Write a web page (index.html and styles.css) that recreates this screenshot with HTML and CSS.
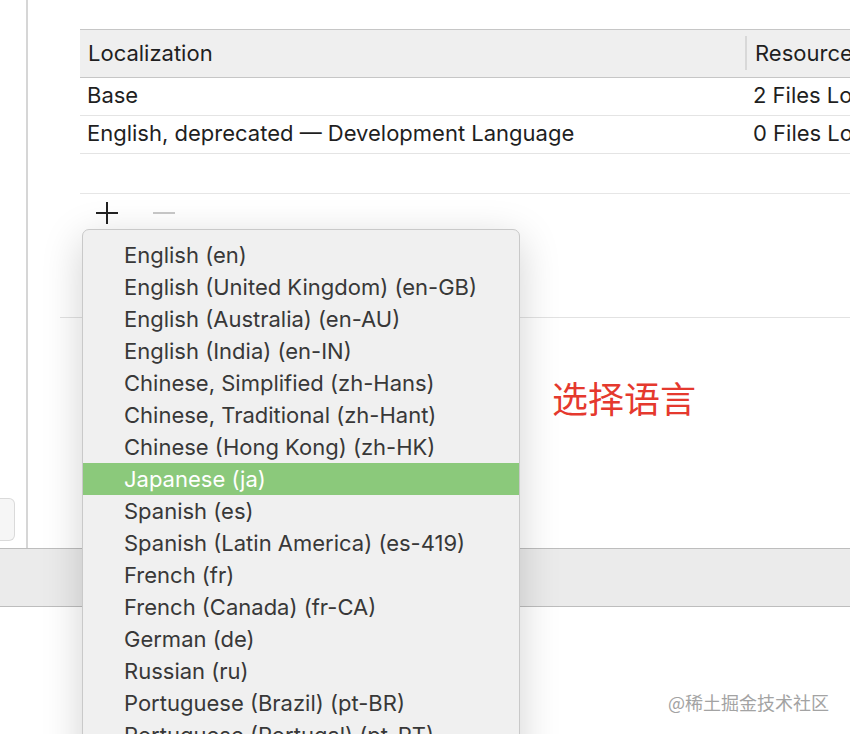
FILE: index.html
```html
<!DOCTYPE html>
<html lang="en">
<head>
<meta charset="utf-8">
<title>Localizations</title>
<link rel="stylesheet" href="styles.css">
</head>
<body>
<div class="page">
  <div class="top">
    <div class="sidebar">
      <div class="side-btn"></div>
    </div>
    <div class="main">
      <div class="table">
        <div class="thead">
          <div class="cell c1">Localization</div>
          <div class="cell c2 divided">Resources</div>
        </div>
        <div class="row">
          <div class="cell c1">Base</div>
          <div class="cell c2">2 Files Localized</div>
        </div>
        <div class="row">
          <div class="cell c1">English, deprecated — Development Language</div>
          <div class="cell c2">0 Files Localized</div>
        </div>
      </div>
      <div class="toolbar">
        <svg class="tool" width="22" height="22" viewBox="0 0 22 22"><path d="M11 0V22M0 11H22" stroke="#222" stroke-width="2" fill="none"/></svg>
        <svg class="tool" width="22" height="22" viewBox="0 0 22 22"><path d="M0 11H22" stroke="#c9c9c9" stroke-width="2" fill="none"/></svg>
      </div>
      <div class="panel-line"></div>
      <div class="note">选择语言</div>
    </div>
  </div>
  <div class="band"></div>
  <div class="bottom">
    <span class="watermark">@稀土掘金技术社区</span>
  </div>

  <div class="menu">
    <div class="item">English (en)</div>
    <div class="item">English (United Kingdom) (en-GB)</div>
    <div class="item">English (Australia) (en-AU)</div>
    <div class="item">English (India) (en-IN)</div>
    <div class="item">Chinese, Simplified (zh-Hans)</div>
    <div class="item">Chinese, Traditional (zh-Hant)</div>
    <div class="item">Chinese (Hong Kong) (zh-HK)</div>
    <div class="item selected">Japanese (ja)</div>
    <div class="item">Spanish (es)</div>
    <div class="item">Spanish (Latin America) (es-419)</div>
    <div class="item">French (fr)</div>
    <div class="item">French (Canada) (fr-CA)</div>
    <div class="item">German (de)</div>
    <div class="item">Russian (ru)</div>
    <div class="item">Portuguese (Brazil) (pt-BR)</div>
    <div class="item">Portuguese (Portugal) (pt-PT)</div>
    <div class="item">Italian (it)</div>
  </div>
</div>
</body>
</html>
```

FILE: styles.css
```css
* { box-sizing: border-box; }
html, body {
  margin: 0;
  padding: 0;
  background: #fff;
}
body {
  width: 850px;
  height: 734px;
  overflow: hidden;
  font-family: Inter, "Noto Sans", "Noto Sans CJK SC", sans-serif;
  color: #1f1f1f;
}
.page {
  position: relative;
  width: 850px;
  height: 734px;
  overflow: hidden;
}
.top {
  display: flex;
  height: 548px;
}
.sidebar {
  width: 28px;
  flex: none;
  border-right: 2px solid #d6d6d6;
  display: flex;
  flex-direction: column;
  justify-content: flex-end;
  padding-bottom: 7px;
}
.side-btn {
  width: 15px;
  height: 43px;
  background: #f6f6f6;
  border: 1px solid #dadada;
  border-left: none;
  border-radius: 0 6px 6px 0;
}
.main {
  flex: 1;
  min-width: 0;
  padding-top: 29px;
  display: flex;
  flex-direction: column;
}
.table {
  margin-left: 52px;
  font-size: 22px;
}
.thead {
  display: flex;
  height: 49px;
  background: #efefef;
  border-top: 1px solid #c6c6c6;
  border-bottom: 1px solid #c6c6c6;
  align-items: center;
  padding-bottom: 1px;
}
.row {
  display: flex;
  height: 38px;
  border-bottom: 1px solid #e4e4e4;
  align-items: center;
  padding-bottom: 3px;
}
.cell {
  white-space: nowrap;
  overflow: hidden;
}
.c1 {
  width: 665px;
  flex: none;
  padding-left: 7px;
}
.thead .c1 { padding-left: 8px; }
.c2 {
  flex: 1;
  padding-left: 8px;
}
.divided {
  border-left: 2px solid #d8d8d8;
  line-height: 34px;
}
.toolbar {
  margin-top: 39px;
  margin-left: 52px;
  height: 124px;
  border-top: 1px solid #e6e6e6;
  display: flex;
  align-items: flex-start;
  gap: 35px;
  padding: 8px 0 0 16px;
}
.tool { display: block; flex: none; }
.panel-line {
  margin-left: 32px;
  border-top: 1px solid #e2e2e2;
}
.note {
  margin-top: 58px;
  padding-left: 524px;
  font-family: "Noto Sans CJK SC", sans-serif;
  font-size: 36px;
  line-height: 42px;
  color: #e5392e;
}
.band {
  height: 59px;
  background: #ebebeb;
  border-top: 1px solid #bdbdbd;
  border-bottom: 1px solid #bdbdbd;
}
.bottom {
  display: flex;
  justify-content: flex-end;
  padding: 83px 21px 0 0;
}
.watermark {
  font-family: "Noto Sans CJK SC", sans-serif;
  font-size: 18px;
  line-height: 24px;
  color: #a3a3a3;
}
.menu {
  position: absolute;
  left: 82px;
  top: 229px;
  width: 438px;
  padding-top: 9px;
  background: #f0f0f0;
  border: 1px solid #c9c9c9;
  border-radius: 7px;
  box-shadow: 0 10px 40px rgba(0, 0, 0, 0.18);
  font-size: 22px;
  color: #383838;
}
.item {
  height: 32px;
  line-height: 32px;
  padding-left: 41px;
  white-space: nowrap;
}
.item.selected {
  background: #8bc97b;
  color: #fff;
}
```
